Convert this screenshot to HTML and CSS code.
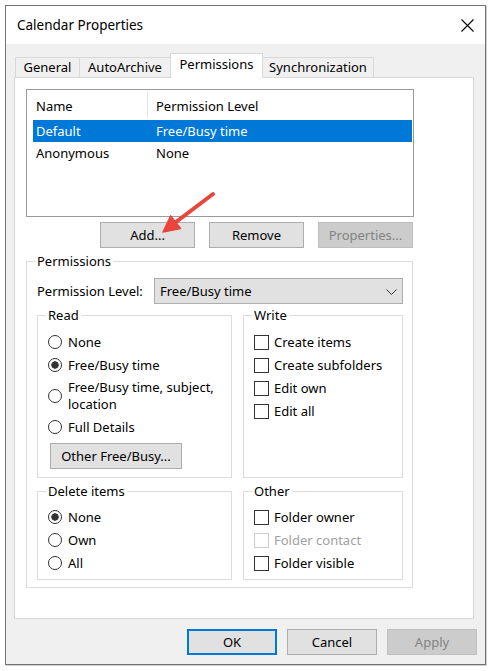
FILE: index.html
```html
<!DOCTYPE html>
<html>
<head>
<meta charset="utf-8">
<title>Calendar Properties</title>
<link rel="stylesheet" href="styles.css">
</head>
<body>
<div class="window">
  <div class="titlebar">
    <span class="title">Calendar Properties</span>
    <svg class="close" width="13" height="13" viewBox="0 0 13 13"><path d="M0.5 0.5 L12.5 12.5 M12.5 0.5 L0.5 12.5" stroke="#000" stroke-width="1.1" fill="none"/></svg>
  </div>
  <div class="content">
    <div class="tabs">
      <div class="tab t-general">General</div>
      <div class="tab t-auto">AutoArchive</div>
      <div class="tab active t-perm">Permissions</div>
      <div class="tab t-sync">Synchronization</div>
    </div>
    <div class="panel">
      <div class="listview">
        <div class="lv-head">
          <span class="c1">Name</span>
          <span class="lv-div"></span>
          <span class="c2">Permission Level</span>
        </div>
        <div class="lv-row sel"><span>Default</span><span>Free/Busy time</span></div>
        <div class="lv-row"><span>Anonymous</span><span>None</span></div>
      </div>
      <div class="btnrow">
        <div class="btn">Add...</div>
        <div class="btn">Remove</div>
        <div class="btn disabled">Properties...</div>
      </div>
      <fieldset class="group perms">
        <legend>Permissions</legend>
        <div class="level-row">
          <span>Permission Level:</span>
          <div class="select">
            <span>Free/Busy time</span>
            <svg width="11" height="6" viewBox="0 0 11 6"><path d="M0.5 0.5 L5.5 5.5 L10.5 0.5" stroke="#333" stroke-width="1" fill="none"/></svg>
          </div>
        </div>
        <div class="cols">
          <fieldset class="group sub">
            <legend>Read</legend>
            <div class="item"><span class="radio"></span><span>None</span></div>
            <div class="item"><span class="radio on"></span><span>Free/Busy time</span></div>
            <div class="item two"><span class="radio"></span><span class="lines"><span class="ln">Free/Busy time, subject,</span><span class="ln">location</span></span></div>
            <div class="item"><span class="radio"></span><span>Full Details</span></div>
            <div class="btn other">Other Free/Busy...</div>
          </fieldset>
          <fieldset class="group sub">
            <legend>Write</legend>
            <div class="item"><span class="check"></span><span>Create items</span></div>
            <div class="item"><span class="check"></span><span>Create subfolders</span></div>
            <div class="item"><span class="check"></span><span>Edit own</span></div>
            <div class="item"><span class="check"></span><span>Edit all</span></div>
          </fieldset>
          <fieldset class="group sub low">
            <legend>Delete items</legend>
            <div class="item"><span class="radio on"></span><span>None</span></div>
            <div class="item"><span class="radio"></span><span>Own</span></div>
            <div class="item"><span class="radio"></span><span>All</span></div>
          </fieldset>
          <fieldset class="group sub low">
            <legend>Other</legend>
            <div class="item"><span class="check"></span><span>Folder owner</span></div>
            <div class="item disabled"><span class="check"></span><span>Folder contact</span></div>
            <div class="item"><span class="check"></span><span>Folder visible</span></div>
          </fieldset>
        </div>
      </fieldset>
    </div>
    <div class="footer">
      <div class="btn default">OK</div>
      <div class="btn">Cancel</div>
      <div class="btn disabled">Apply</div>
    </div>
  </div>
</div>
<svg class="annot" width="492" height="671" viewBox="0 0 492 671">
  <line x1="213" y1="194" x2="176" y2="222" stroke="#e8453c" stroke-width="4" stroke-linecap="round"/>
  <polygon points="163,232 170.7,215.9 180.5,228.5" fill="#e8453c" stroke="#e8453c" stroke-width="1.5" stroke-linejoin="round"/>
</svg>
</body>
</html>
```

FILE: styles.css
```css
* { box-sizing: border-box; }
html, body { margin: 0; padding: 0; }
body {
  position: relative;
  width: 492px;
  height: 671px;
  overflow: hidden;
  background: #fff;
  font-family: "Noto Sans", "Segoe UI", sans-serif;
  font-size: 13px;
  color: #000;
}
.window {
  margin: 5px 0 0 5px;
  width: 481px;
  height: 660px;
  border: 1px solid #737373;
  background: #f0f0f0;
  box-shadow: 1px 1px 0 #cfcfcf;
}
.titlebar {
  height: 38px;
  background: #fff;
  display: flex;
  align-items: center;
  justify-content: space-between;
  padding: 0 11px 0 11px;
}
.title { font-size: 13.5px; }
.close { display: block; }
.content { padding-top: 9px; }

.tabs {
  display: flex;
  align-items: flex-end;
  height: 24px;
  margin-left: 9px;
}
.tab {
  height: 20px;
  border: 1px solid #d9d9d9;
  border-bottom: 0;
  background: #f0f0f0;
  line-height: 18px;
  text-align: center;
  margin-right: -1px;
}
.t-general { width: 65px; }
.t-auto { width: 92px; }
.t-perm { width: 93px; }
.t-sync { width: 112px; }
.tab.active {
  position: relative;
  z-index: 1;
  height: 25px;
  margin-bottom: -1px;
  background: #fff;
  line-height: 21px;
}

.panel {
  margin-left: 8px;
  width: 460px;
  height: 542px;
  background: #fff;
  border: 1px solid #d9d9d9;
  padding: 11px 0 0 11px;
}

.listview {
  width: 388px;
  height: 128px;
  border: 1px solid #9a9a9a;
  background: #fff;
}
.lv-head {
  display: grid;
  grid-template-columns: 111px 1px 1fr;
  height: 30px;
  margin-left: 6px;
  padding-left: 3px;
}
.lv-head .c1, .lv-head .c2 { line-height: 16px; padding-top: 8px; }
.lv-head .c2 { padding-left: 8px; }
.lv-div { background: #e5e5e5; margin: 1px 0 2px; }
.lv-row {
  display: grid;
  grid-template-columns: 120px 1fr;
  height: 22px;
  line-height: 22px;
  margin: 0 1px 0 6px;
  padding-left: 3px;
}
.lv-row.sel { background: #0078d7; color: #fff; }

.btnrow {
  display: flex;
  justify-content: flex-end;
  gap: 14px;
  width: 387px;
  margin-top: 5px;
}
.btn {
  width: 95px;
  height: 26px;
  border: 1px solid #adadad;
  background: #e1e1e1;
  display: flex;
  align-items: center;
  justify-content: center;
}
.btn.disabled {
  background: #cccccc;
  border-color: #bfbfbf;
  color: #838383;
}
.btn.default { border: 2px solid #0078d7; }

fieldset.group {
  margin: 0;
  border: 1px solid #dcdcdc;
  min-width: 0;
}
fieldset.group legend {
  padding: 0 2px;
  margin-left: -2px;
  line-height: 16px;
}
fieldset.perms {
  margin-top: 5px;
  width: 387px;
  padding: 9px 9px 7px 10px;
}
.level-row {
  display: flex;
  align-items: center;
  justify-content: space-between;
  height: 26px;
}
.select {
  width: 249px;
  height: 26px;
  border: 1px solid #adadad;
  background: #e1e1e1;
  display: flex;
  align-items: center;
  justify-content: space-between;
  padding: 0 5px 0 5px;
}
.select svg { display: block; margin-top: 1px; }

.cols {
  display: grid;
  grid-template-columns: 195px 160px;
  column-gap: 11px;
  row-gap: 5px;
  margin-top: 3px;
}
fieldset.sub { padding: 7px 8px 8px 10px; }
fieldset.sub.low { padding: 6px 8px 5px 10px; }

.item {
  display: flex;
  align-items: center;
  padding: 4px 0 3px;
  line-height: 16px;
  white-space: nowrap;
}
.item.two { padding: 3px 0 2px; }
.lines { display: flex; flex-direction: column; }
.ln { display: block; height: 17px; line-height: 17px; }
.radio {
  flex: none;
  width: 14px;
  height: 14px;
  border: 1px solid #333;
  border-radius: 50%;
  background: #fff;
  margin-right: 6px;
}
.radio.on {
  background: radial-gradient(circle, #333 0, #333 3.4px, #fff 4px);
}
.check {
  flex: none;
  width: 15px;
  height: 15px;
  border: 1px solid #333;
  background: #fff;
  margin-right: 5px;
}
.item.disabled { color: #a0a0a0; }
.item.disabled .check { border-color: #cccccc; }

.btn.other {
  width: 132px;
  margin: 5px 0 0 2px;
}

.footer {
  display: flex;
  justify-content: flex-end;
  gap: 10px;
  padding-right: 8px;
  margin-top: 10px;
}
.footer .btn { width: 90px; }

.annot {
  position: absolute;
  left: 0;
  top: 0;
  pointer-events: none;
}
```
